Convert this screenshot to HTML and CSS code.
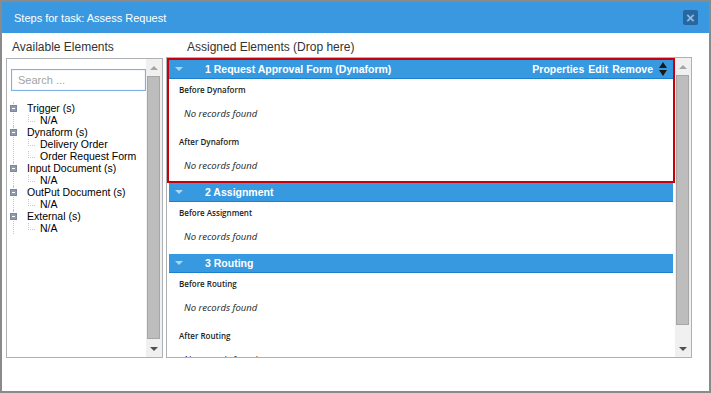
FILE: index.html
```html
<!DOCTYPE html>
<html lang="en">
    <head>
        <meta charset="UTF-8" />
        <meta name="viewport" content="width=device-width, initial-scale=1.0" />
        <title>Steps for task</title>
        <link rel="stylesheet" href="styles.css">
    </head>
    <body>
        <div class="dialog">
            <div class="titlebar">
                <span class="title">Steps for task: Assess Request</span>
                <a class="close" href="javascript:;">&times;</a>
            </div>

            <div class="content">
                <!-- 左侧：可用元素 -->
                <div class="col col-left">
                    <div class="col-label">Available Elements</div>
                    <div class="panel">
                        <div class="panel-inner">
                            <input class="search" type="text" placeholder="Search ..." />
                            <ul class="tree">
                                <li class="group">
                                    <div class="node"><span class="toggle"></span>Trigger (s)</div>
                                    <div class="leaf"><span class="branch"></span>N/A</div>
                                </li>
                                <li class="group">
                                    <div class="node"><span class="toggle"></span>Dynaform (s)</div>
                                    <div class="leaf"><span class="branch"></span>Delivery Order</div>
                                    <div class="leaf"><span class="branch"></span>Order Request Form</div>
                                </li>
                                <li class="group">
                                    <div class="node"><span class="toggle"></span>Input Document (s)</div>
                                    <div class="leaf"><span class="branch"></span>N/A</div>
                                </li>
                                <li class="group">
                                    <div class="node"><span class="toggle"></span>OutPut Document (s)</div>
                                    <div class="leaf"><span class="branch"></span>N/A</div>
                                </li>
                                <li class="group">
                                    <div class="node"><span class="toggle"></span>External (s)</div>
                                    <div class="leaf"><span class="branch"></span>N/A</div>
                                </li>
                            </ul>
                        </div>
                        <div class="scrollbar">
                            <span class="sb-btn up"></span>
                            <span class="sb-thumb"></span>
                            <span class="sb-btn down"></span>
                        </div>
                    </div>
                </div>

                <!-- 右侧：已分配元素 -->
                <div class="col col-right">
                    <div class="col-label">Assigned Elements (Drop here)</div>
                    <div class="panel">
                        <div class="panel-inner">
                            <div class="step selected">
                                <div class="step-head">
                                    <span class="caret"></span>
                                    <span class="step-name">1 Request Approval Form (Dynaform)</span>
                                    <span class="actions">
                                        <a href="javascript:;">Properties</a>
                                        <a href="javascript:;">Edit</a>
                                        <a href="javascript:;">Remove</a>
                                    </span>
                                    <span class="order">
                                        <i class="arrow-up"></i>
                                        <i class="arrow-down"></i>
                                    </span>
                                </div>
                                <div class="step-body">
                                    <div class="slot-label">Before Dynaform</div>
                                    <div class="empty">No records found</div>
                                    <div class="slot-label">After Dynaform</div>
                                    <div class="empty">No records found</div>
                                </div>
                            </div>

                            <div class="step">
                                <div class="step-head">
                                    <span class="caret"></span>
                                    <span class="step-name">2 Assignment</span>
                                </div>
                                <div class="step-body">
                                    <div class="slot-label">Before Assignment</div>
                                    <div class="empty">No records found</div>
                                </div>
                            </div>

                            <div class="step">
                                <div class="step-head">
                                    <span class="caret"></span>
                                    <span class="step-name">3 Routing</span>
                                </div>
                                <div class="step-body">
                                    <div class="slot-label">Before Routing</div>
                                    <div class="empty">No records found</div>
                                    <div class="slot-label">After Routing</div>
                                    <div class="empty">No records found</div>
                                </div>
                            </div>
                        </div>
                        <div class="scrollbar">
                            <span class="sb-btn up"></span>
                            <span class="sb-thumb"></span>
                            <span class="sb-btn down"></span>
                        </div>
                    </div>
                </div>
            </div>
        </div>
    </body>
</html>
```

FILE: styles.css
```css
* {
    margin: 0;
    padding: 0;
    box-sizing: border-box;
}

ul {
    list-style: none;
}

body {
    width: 711px;
    height: 393px;
    overflow: hidden;
    background-color: #8a8a8a;
    font-family: "Liberation Sans", Arial, sans-serif;
}

.dialog {
    width: 707px;
    height: 389px;
    margin: 2px 0 0 2px;
    background-color: #fff;
}

/* 标题栏 */
.titlebar {
    height: 31px;
    padding: 0 11px 0 12px;
    background-color: #3a98e0;
    color: #fff;
    font-size: 11px;
    display: flex;
    align-items: center;
    justify-content: space-between;
}

.close {
    width: 15px;
    height: 15px;
    margin-top: -1px;
    border-radius: 2px;
    background-color: #2866a0;
    color: #8dbbe3;
    font-size: 15px;
    font-weight: bold;
    line-height: 15px;
    text-align: center;
    text-decoration: none;
}

.content {
    display: flex;
    gap: 3px;
    padding-left: 4px;
}

.col-left {
    width: 157px;
}

.col-right {
    width: 526px;
}

.col-label {
    height: 25px;
    padding-top: 7px;
    line-height: 15px;
    font-size: 12px;
    color: #333;
}

.col-left .col-label {
    padding-left: 6px;
}

.col-right .col-label {
    height: 24px;
    padding-left: 21px;
}

.panel {
    height: 300px;
    border: 1px solid #adb1b3;
    display: flex;
}

.col-right .panel {
    height: 301px;
}

.panel-inner {
    flex: 1;
    overflow: hidden;
}

.col-left .panel-inner {
    padding: 10px 0 0 4px;
}

/* 搜索框 */
.search {
    display: block;
    width: 135px;
    height: 22px;
    padding-left: 6px;
    border: 1px solid #7eaee8;
    box-shadow: inset 0 0 2px #cfe2f7;
    outline: none;
    font-family: "Liberation Sans", Arial, sans-serif;
    font-size: 11px;
}

.search::placeholder {
    color: #a3a3a3;
}

/* 元素树 */
.tree {
    margin: 11px 0 0 -1px;
    font-size: 10.5px;
    line-height: 12px;
    color: #000;
}

.group {
    margin-left: 3px;
    border-left: 1px dotted #c8c8c8;
}

.node {
    margin-left: -4px;
    display: flex;
    align-items: center;
}

.toggle {
    width: 7px;
    height: 7px;
    margin-right: 10px;
    background-color: #8f9ab0;
    border: 1px solid #7d879c;
    display: flex;
    align-items: center;
    justify-content: center;
}

.toggle::after {
    content: '';
    width: 3px;
    height: 1px;
    background-color: #fff;
}

.leaf {
    padding-left: 14px;
    display: flex;
}

.branch {
    width: 7px;
    height: 7px;
    margin: 1px 5px 0 0;
    border-left: 1px dotted #c8c8c8;
    border-bottom: 1px dotted #c8c8c8;
}

/* 滚动条 */
.scrollbar {
    width: 16px;
    background-color: #f0f0f0;
    display: flex;
    flex-direction: column;
}

.sb-btn {
    height: 17px;
    display: flex;
    align-items: center;
    justify-content: center;
}

.sb-btn::after {
    content: '';
    border-left: 4px solid transparent;
    border-right: 4px solid transparent;
}

.sb-btn.up::after {
    border-bottom: 4px solid #a6a6a6;
}

.sb-btn.down {
    margin-top: auto;
}

.sb-btn.down::after {
    border-top: 4px solid #505050;
}

.sb-thumb {
    height: 263px;
    margin: 0 2px 0 1px;
    background-color: #bdbdbd;
    border: 1px solid #a6a6a6;
}

.col-right .sb-thumb {
    height: 250px;
}

/* 步骤区块 */
.step {
    border: 2px solid transparent;
    border-top: 0;
}

.step.selected {
    border: 2px solid #c8000a;
}

.step-head {
    height: 19px;
    padding: 0 6px;
    background-color: #3799e0;
    border-bottom: 1px solid #1d7fd0;
    color: #fff;
    font-size: 10.5px;
    font-weight: bold;
    display: flex;
    align-items: center;
}

.caret {
    margin-right: 22px;
    border-left: 4px solid transparent;
    border-right: 4px solid transparent;
    border-top: 4px solid #b3d5f2;
}

.step-name {
    flex: 1;
}

.actions {
    display: flex;
    gap: 4px;
}

.actions a {
    color: #fff;
    text-decoration: none;
}

.order {
    margin-left: 6px;
    display: flex;
    flex-direction: column;
    gap: 2px;
}

.order i {
    border-left: 4px solid transparent;
    border-right: 4px solid transparent;
}

.order .arrow-up {
    border-bottom: 6px solid #1a1a1a;
}

.order .arrow-down {
    border-top: 6px solid #1a1a1a;
}

.step-body {
    padding: 4px 0 8px 10px;
}

.slot-label {
    font-family: "Open Sans", "Liberation Sans", sans-serif;
    font-size: 8px;
    font-weight: 600;
    line-height: 14px;
    color: #222;
}

.empty {
    margin: 10px 0 0 5px;
    font-family: "Open Sans", "Liberation Sans", sans-serif;
    font-size: 9.5px;
    font-style: italic;
    line-height: 14px;
    color: #222;
}

.empty + .slot-label {
    margin-top: 14px;
}
```
